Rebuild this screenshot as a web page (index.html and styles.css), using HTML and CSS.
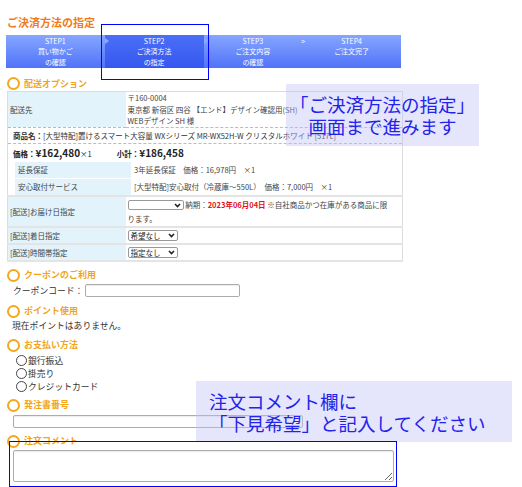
FILE: index.html
```html
<!DOCTYPE html>
<html lang="ja">
<head>
    <meta charset="UTF-8">
    <meta name="viewport" content="width=device-width, initial-scale=1.0">
    <title>ご決済方法の指定</title>
    <link rel="stylesheet" href="styles.css">
</head>
<body>
<div class="page">
    <h1 class="page-title">ご決済方法の指定</h1>

    <ol class="steps">
        <li class="step"><span>STEP1</span><span>買い物かご</span><span>の確認</span></li>
        <li class="step current"><span>STEP2</span><span>ご決済方法</span><span>の指定</span></li>
        <li class="step"><span>STEP3</span><span>ご注文内容</span><span>の確認</span></li>
        <li class="step"><span>STEP4</span><span>ご注文完了</span></li>
    </ol>

    <h2 class="sec-title sec-delivery">配送オプション</h2>
    <table class="opt-table">
        <tr class="addr-row">
            <th>配送先</th>
            <td class="addr">〒160-0004<br>東京都 新宿区 四谷 【エンド】デザイン確認用(SH)<br>WEBデザイン SH 様</td>
        </tr>
        <tr class="item-row">
            <td colspan="2">
                <p class="item-name"><b>商品名：</b>[大型特配]置けるスマート大容量 WXシリーズ MR-WX52H-W クリスタルホワイト [517L]</p>
                <p class="item-price"><b>価格：<em>¥162,480</em></b>×1<b class="subtotal">小計：<em>¥186,458</em></b></p>
                <table class="svc-table">
                    <tr><th>延長保証</th><td>3年延長保証　価格：16,978円　×1</td></tr>
                    <tr><th>安心取付サービス</th><td>[大型特配]安心取付（冷蔵庫～550L）　価格：7,000円　×1</td></tr>
                </table>
            </td>
        </tr>
        <tr class="date-row">
            <th>[配送]お届け日指定</th>
            <td>
                <span class="sel sel-wide"><select><option></option></select><svg width="7" height="5" viewBox="0 0 7 5"><path d="M1 1l2.5 2.5L6 1" fill="none" stroke="#222" stroke-width="1.6"/></svg></span>
                納期：<b class="due">2023年06月04日</b> ※自社商品かつ在庫がある商品に限ります。
            </td>
        </tr>
        <tr>
            <th>[配送]着日指定</th>
            <td><span class="sel"><select><option>希望なし</option></select><svg width="7" height="5" viewBox="0 0 7 5"><path d="M1 1l2.5 2.5L6 1" fill="none" stroke="#222" stroke-width="1.6"/></svg></span></td>
        </tr>
        <tr>
            <th>[配送]時間帯指定</th>
            <td><span class="sel"><select><option>指定なし</option></select><svg width="7" height="5" viewBox="0 0 7 5"><path d="M1 1l2.5 2.5L6 1" fill="none" stroke="#222" stroke-width="1.6"/></svg></span></td>
        </tr>
    </table>

    <h2 class="sec-title">クーポンのご利用</h2>
    <div class="coupon">
        <label for="coupon">クーポンコード：</label>
        <input type="text" id="coupon" class="field coupon-field">
    </div>

    <h2 class="sec-title">ポイント使用</h2>
    <p class="plain">現在ポイントはありません。</p>

    <h2 class="sec-title">お支払い方法</h2>
    <ul class="pay-list">
        <li><label><input type="radio" name="pay">銀行振込</label></li>
        <li><label><input type="radio" name="pay">掛売り</label></li>
        <li><label><input type="radio" name="pay">クレジットカード</label></li>
    </ul>

    <h2 class="sec-title sec-order">発注書番号</h2>
    <input type="text" class="field order-field">

    <h2 class="sec-title">注文コメント</h2>
    <textarea class="field comment-field"></textarea>
</div>

<!-- 説明用の吹き出しと枠 -->
<div class="frame frame-step"></div>
<div class="callout callout-top">「ご決済方法の指定」<br>画面まで進みます</div>
<div class="callout callout-bottom">注文コメント欄に<br>「下見希望」と記入してください</div>
<div class="frame frame-comment"></div>
</body>
</html>
```

FILE: styles.css
```css
* {
    box-sizing: border-box;
}
body {
    margin: 0;
    position: relative;
    font-family: "Noto Sans CJK JP", "Noto Sans", sans-serif;
    color: #333;
    background: #fff;
}
.page {
    width: 522px;
    padding: 15px 0 20px 7px;
}
.page-title {
    margin: 0;
    font-size: 11px;
    line-height: 14px;
    font-weight: bold;
    color: #ef7b1d;
}

/* ステップバー */
.steps {
    list-style: none;
    margin: 6px 0 0 -1px;
    padding: 0;
    width: 395px;
    height: 33px;
    display: grid;
    grid-template-columns: repeat(4, 1fr);
    background: linear-gradient(#86a6ff, #5073f9);
}
.step {
    position: relative;
    display: flex;
    flex-direction: column;
    align-items: center;
    padding-top: 1px;
    font-size: 7px;
    line-height: 10.3px;
    color: #fff;
}
.step.current {
    background: linear-gradient(#4b6ff6, #3557f0);
}
.step:nth-child(1)::after,
.step:nth-child(2)::after {
    content: "";
    position: absolute;
    right: -4px;
    top: 3px;
    z-index: 1;
    border-style: solid;
    border-width: 3px 0 3px 4px;
    border-color: transparent transparent transparent #8eacff;
}
.step:nth-child(3)::after {
    content: ">";
    position: absolute;
    right: -3px;
    top: 1px;
    font-size: 7px;
    line-height: 10px;
    color: #fff;
}

/* 見出し */
.sec-title {
    display: flex;
    align-items: center;
    margin: 7px 0 0;
    font-size: 9px;
    line-height: 12px;
    font-weight: bold;
    color: #f2a51a;
}
.sec-title::before {
    content: "";
    width: 9px;
    height: 9px;
    margin-right: 4px;
    border: 2px solid #f4a81c;
    border-radius: 50%;
}
.sec-delivery {
    margin-top: 9px;
}

/* 配送オプション */
.opt-table {
    margin-top: 1px;
    width: 394px;
    border-collapse: collapse;
    border: 1px solid #dcdcdc;
    font-size: 7.5px;
    color: #444;
}
.opt-table > tbody > tr > th {
    width: 118px;
    height: 17px;
    padding: 0 2px;
    background: #e2f3fc;
    font-weight: normal;
    text-align: left;
    vertical-align: middle;
}
.opt-table > tbody > tr > td {
    height: 17px;
    padding: 0 2px;
    vertical-align: middle;
}
.opt-table > tbody > tr {
    border-bottom: 2px solid #e4e4e4;
}
.opt-table > tbody > tr.addr-row {
    border-bottom: 1px dashed #bbb;
}
.addr {
    padding: 3px 2px 0;
    line-height: 11.5px;
}
.opt-table > tbody > tr.item-row > td {
    padding: 0;
}
.item-name {
    margin: 0;
    padding-left: 5px;
    line-height: 15px;
    border-bottom: 1px dashed #bbb;
    color: #333;
}
.item-price {
    margin: 0;
    padding: 1px 0 0 5px;
    line-height: 15px;
    color: #222;
}
.item-price em {
    font-style: normal;
    font-size: 10px;
}
.subtotal {
    margin-left: 25px;
}
.svc-table {
    width: 387px;
    margin: 0 0 -1px 7px;
    border-spacing: 0 1px;
}
.svc-table th,
.svc-table td {
    height: 16px;
    padding: 0 3px;
    text-align: left;
    font-weight: normal;
}
.svc-table th {
    width: 116px;
    background: #e2f3fc;
}
.opt-table > tbody > tr.date-row > th,
.opt-table > tbody > tr.date-row > td {
    height: 30px;
}
.date-row td {
    line-height: 14px;
}
.opt-table > tbody > tr.date-row > td {
    padding: 1px 10px 0 2px;
}
.due {
    color: #e3121b;
}
.sel {
    display: inline-flex;
    align-items: center;
    justify-content: space-between;
    width: 50px;
    height: 11px;
    padding-right: 2px;
    border: 1px solid #999;
    border-radius: 2px;
    vertical-align: middle;
    background: #fff;
}
.sel-wide {
    width: 56px;
    height: 10px;
}
.sel select {
    appearance: none;
    border: 0;
    padding: 0 2px;
    margin: 0;
    background: transparent;
    font-family: inherit;
    font-size: 7.5px;
    line-height: 9px;
    color: #222;
}

/* 入力欄 */
.field {
    display: block;
    border: 1px solid #acacac;
    border-radius: 2px;
    box-shadow: inset 0 1px 1px rgba(0, 0, 0, 0.08);
    background: #fff;
    font-family: inherit;
}
.coupon {
    display: flex;
    align-items: center;
    height: 14px;
    margin: 2px 0 0 6px;
    font-size: 8.8px;
}
.coupon-field {
    width: 155px;
    height: 13px;
    margin-left: 2px;
}
.plain {
    margin: 2px 0 0 5px;
    font-size: 8.8px;
    line-height: 12px;
}
.pay-list {
    list-style: none;
    margin: 2px 0 0 9px;
    padding: 0;
    font-size: 8.8px;
    line-height: 13px;
}
.pay-list label {
    display: flex;
    align-items: center;
}
.pay-list input {
    appearance: none;
    width: 11px;
    height: 11px;
    margin: 0 1px 0 0;
    border: 1px solid #444;
    border-radius: 50%;
}
.sec-order {
    margin-top: 6px;
}
.order-field {
    width: 290px;
    height: 13px;
    margin: 3px 0 0 6px;
}
.comment-field {
    width: 381px;
    height: 32px;
    margin: 2px 0 0 6px;
}

/* 吹き出し・枠 */
.callout {
    position: absolute;
    background: rgba(190, 190, 245, 0.4);
    color: #2323ec;
    font-size: 18.5px;
    line-height: 22px;
}
.callout-top {
    left: 286px;
    top: 84px;
    width: 193px;
    height: 62px;
    padding-top: 9px;
    text-align: center;
}
.callout-bottom {
    left: 196px;
    top: 381px;
    width: 316px;
    height: 61px;
    padding: 9px 0 0 13px;
}
.frame {
    position: absolute;
    border: 1px solid #0000ff;
}
.frame-step {
    left: 101px;
    top: 24px;
    width: 108px;
    height: 56px;
}
.frame-comment {
    left: 9px;
    top: 441px;
    width: 388px;
    height: 46px;
}
```
